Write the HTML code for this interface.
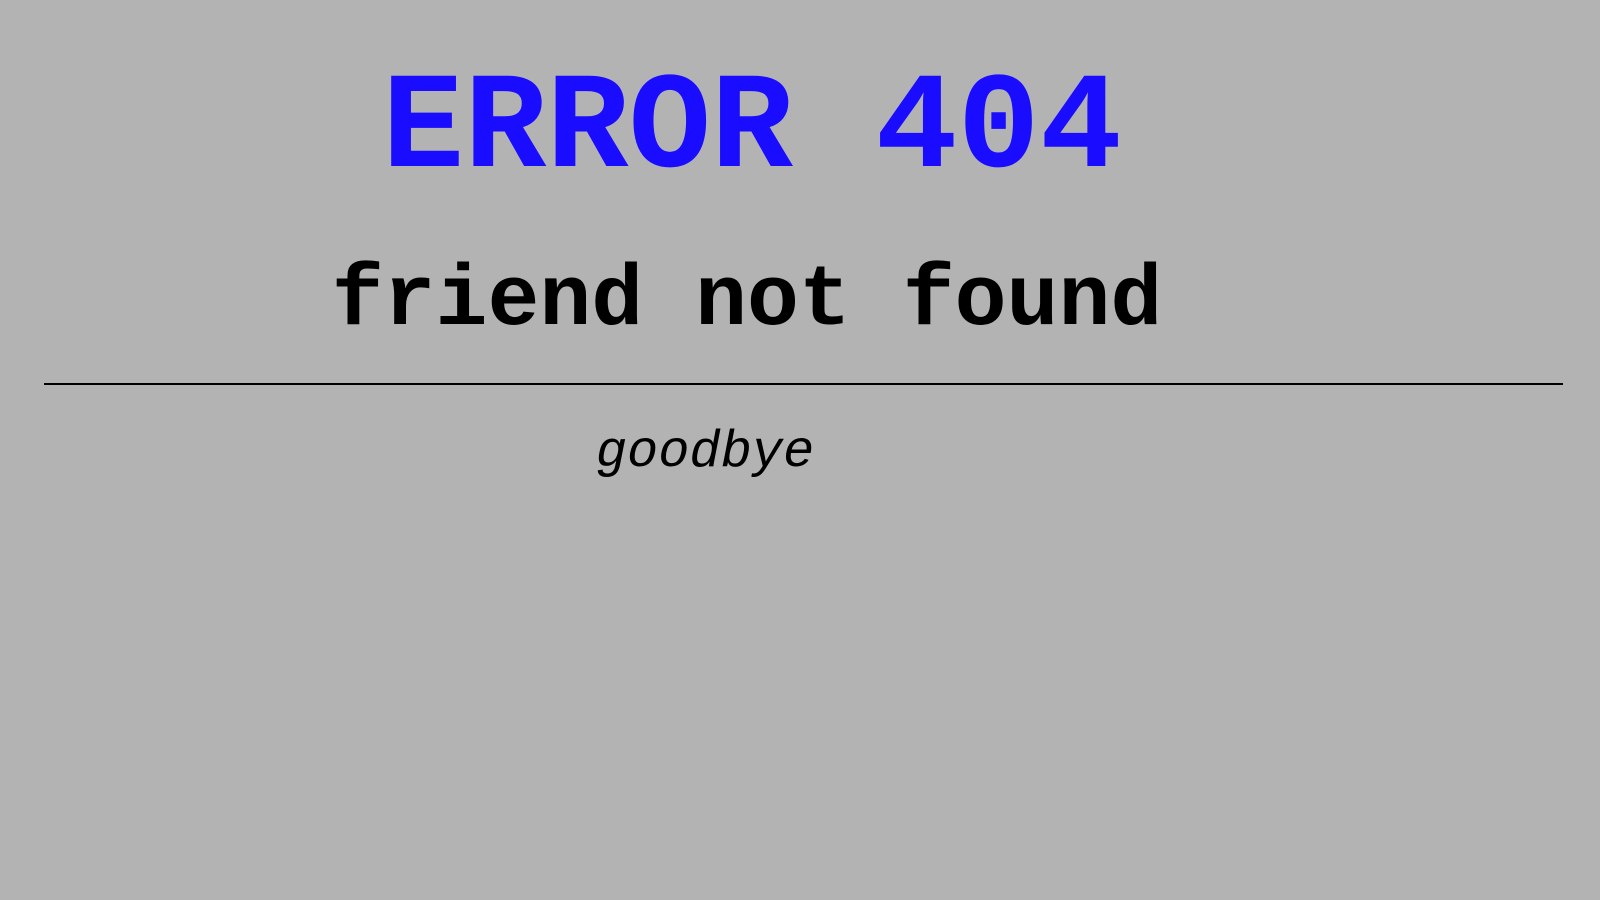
<!DOCTYPE html>
<html><head><meta charset="utf-8"><style>
html,body{margin:0;padding:0;width:1600px;height:900px;background:#b3b3b3;overflow:hidden;font-family:"Liberation Mono",monospace;}
.t{position:absolute;line-height:1;white-space:pre;transform:translateX(-50%);}
#e{left:752px;top:62px;font-size:137px;color:#1a0cff;font-weight:bold;}
#f{left:747px;top:258px;font-size:86.5px;color:#000;font-weight:bold;}
#g{left:705px;top:427px;font-size:52px;font-style:italic;color:#000;}
#hr{position:absolute;left:44px;top:383px;width:1519px;height:2px;background:#000;}
</style></head><body>
<div class="t" id="e">ERROR 404</div>
<div class="t" id="f">friend not found</div>
<div id="hr"></div>
<div class="t" id="g">goodbye</div>
</body></html>
